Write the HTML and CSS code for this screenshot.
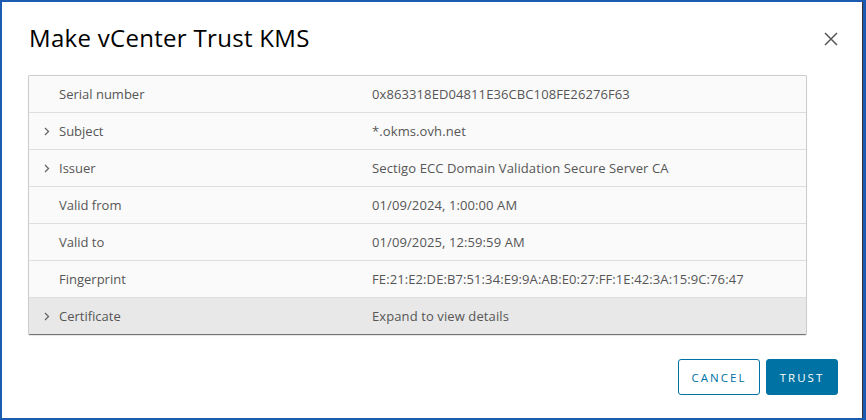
FILE: index.html
```html
<!DOCTYPE html>
<html>
<head>
<meta charset="utf-8">
<link rel="stylesheet" href="styles.css">
</head>
<body>
<div class="dialog">
  <div class="header">
    <h1 class="title">Make vCenter Trust KMS</h1>
    <button class="close" aria-label="Close">
      <svg width="14" height="14" viewBox="0 0 14 14"><path d="M1 1 L13 13 M13 1 L1 13" stroke="#565656" stroke-width="1.5" fill="none"/></svg>
    </button>
  </div>
  <div class="grid">
    <div class="row"><span class="caret"></span><span class="label">Serial number</span><span class="value">0x863318ED04811E36CBC108FE26276F63</span></div>
    <div class="row"><span class="caret"><svg width="6" height="9" viewBox="0 0 6 9"><path d="M1 1 L4.5 4.5 L1 8" stroke="#666" stroke-width="1.3" fill="none"/></svg></span><span class="label">Subject</span><span class="value">*.okms.ovh.net</span></div>
    <div class="row"><span class="caret"><svg width="6" height="9" viewBox="0 0 6 9"><path d="M1 1 L4.5 4.5 L1 8" stroke="#666" stroke-width="1.3" fill="none"/></svg></span><span class="label">Issuer</span><span class="value">Sectigo ECC Domain Validation Secure Server CA</span></div>
    <div class="row"><span class="caret"></span><span class="label">Valid from</span><span class="value">01/09/2024, 1:00:00 AM</span></div>
    <div class="row"><span class="caret"></span><span class="label">Valid to</span><span class="value">01/09/2025, 12:59:59 AM</span></div>
    <div class="row"><span class="caret"></span><span class="label">Fingerprint</span><span class="value">FE:21:E2:DE:B7:51:34:E9:9A:AB:E0:27:FF:1E:42:3A:15:9C:76:47</span></div>
    <div class="row active"><span class="caret"><svg width="6" height="9" viewBox="0 0 6 9"><path d="M1 1 L4.5 4.5 L1 8" stroke="#666" stroke-width="1.3" fill="none"/></svg></span><span class="label">Certificate</span><span class="value">Expand to view details</span></div>
  </div>
  <div class="footer">
    <button class="btn btn-outline">CANCEL</button>
    <button class="btn btn-primary">TRUST</button>
  </div>
</div>
</body>
</html>
```
FILE: styles.css
```css
html, body {
  margin: 0;
  padding: 0;
}
body {
  background: #1b5cb0;
  width: 866px;
  height: 420px;
  overflow: hidden;
  font-family: "Open Sans", "Liberation Sans", sans-serif;
}
.dialog {
  margin: 2px 3px 2px 2px;
  height: 416px;
  background: #fff;
  box-sizing: border-box;
  padding: 0 24px 0 26px;
  display: flex;
  flex-direction: column;
  border-right: 1px solid #333;
}
.header {
  display: flex;
  align-items: center;
  justify-content: space-between;
  height: 73px;
  padding-left: 1px;
}
.title {
  margin: 0;
  font-weight: 400;
  font-size: 24px;
  color: #000;
  letter-spacing: 0.3px;
  padding-bottom: 3px;
}
.close {
  background: none;
  border: 0;
  padding: 0;
  width: 14px;
  height: 14px;
  display: flex;
}
.grid {
  width: 779px;
  box-sizing: border-box;
  border: 1px solid #ccc;
  border-bottom: 1px solid #737373;
  border-radius: 2px;
  background: #fafafa;
  box-shadow: 0 1px 1px rgba(0,0,0,0.1);
}
.row {
  display: flex;
  align-items: center;
  height: 36px;
  border-top: 1px solid #dedede;
  font-size: 13px;
  color: #565656;
}
.row:first-child {
  border-top: 0;
}
.row.active {
  background: #e8e8e8;
}
.caret {
  width: 30px;
  box-sizing: border-box;
  padding-left: 15px;
  display: flex;
  align-items: center;
}
.label {
  width: 313px;
}
.value {
  flex: 1;
  letter-spacing: 0.1px;
}
.footer {
  display: flex;
  justify-content: flex-end;
  gap: 6px;
  margin-top: 24px;
}
.btn {
  height: 36px;
  border-radius: 3px;
  font-family: "Open Sans", "Liberation Sans", sans-serif;
  font-size: 11.5px;
  font-weight: 500;
  letter-spacing: 2px;
  padding: 0;
}
.btn-outline {
  width: 82px;
  background: #fff;
  color: #0072a3;
  border: 1px solid #0072a3;
}
.btn-primary {
  width: 72px;
  background: #0072a3;
  color: #fff;
  border: 1px solid #0072a3;
}
```
